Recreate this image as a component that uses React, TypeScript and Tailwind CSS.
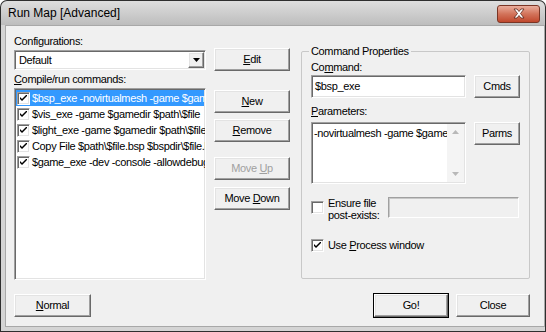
import React from 'react';

const font = { fontFamily: '"Liberation Sans", Arial, sans-serif' };

const btn =
  'flex items-center justify-center bg-[#f0f0f0] text-[11px] text-black border border-t-white border-l-white border-r-[#696969] border-b-[#696969] shadow-[inset_-1px_-1px_0_#a0a0a0,inset_1px_1px_0_#e3e3e3]';

const sunken =
  'border border-t-[#a0a0a0] border-l-[#a0a0a0] border-r-white border-b-white shadow-[inset_1px_1px_0_#696969,inset_-1px_-1px_0_#e3e3e3]';

const Check: React.FC<{ checked?: boolean }> = ({ checked }) => (
  <span className={`w-[13px] h-[13px] shrink-0 bg-white flex items-center justify-center ${sunken}`}>
    {checked && (
      <svg width="7" height="7" viewBox="0 0 7 7">
        <path d="M0 2 L0 4 L2 6 L7 1 L7 -1 L2 4 Z" fill="#000" />
      </svg>
    )}
  </span>
);

const Button: React.FC<{ children: React.ReactNode; className?: string }> = ({ children, className }) => (
  <button className={`${btn} ${className ?? ''}`}>
    <span>{children}</span>
  </button>
);

const commands = [
  '$bsp_exe -novirtualmesh -game $gamedir $path\\$file',
  '$vis_exe -game $gamedir $path\\$file',
  '$light_exe -game $gamedir $path\\$file',
  'Copy File $path\\$file.bsp $bspdir\\$file.bsp',
  '$game_exe -dev -console -allowdebug -game $gamedir',
];

export default function App() {
  return (
    <div style={font} className="w-[546px] h-[332px] bg-[#2e2e2e] rounded-t-[7px] p-px flex flex-col overflow-hidden tracking-[-0.35px]">
      {/* Title bar */}
      <div className="h-[24px] rounded-t-[6px] bg-gradient-to-b from-[#dedede] to-[#bdbdbd] flex items-center justify-between pl-[7px] pr-[5px]">
        <span className="text-[12px] text-black tracking-normal">Run Map [Advanced]</span>
        <div className="w-[43px] h-[18px] mt-[1px] rounded-[3px] border border-[#7a3525] bg-gradient-to-b from-[#e9ad9c] via-[#d2735a] to-[#c0472c] flex items-center justify-center">
          <svg width="14" height="11" viewBox="0 0 14 11">
            <path d="M2 1 L5 1 L7 3.5 L9 1 L12 1 L8.5 5.5 L12 10 L9 10 L7 7.5 L5 10 L2 10 L5.5 5.5 Z" fill="#fff" stroke="#5a2418" strokeWidth="0.8" />
          </svg>
        </div>
      </div>

      {/* Frame */}
      <div className="flex-1 bg-[#d4d4d4] px-[4px] pb-[4px] flex">
        <div className="flex-1 bg-[#f0f0f0] border border-[#a8a8a8] flex flex-col pl-[8px] pr-[14px] pt-[9px] text-[11px] text-black">
          <div className="flex">
            {/* Left column */}
            <div className="w-[192px] flex flex-col">
              <span className="h-[13px] leading-[13px]">Configurations:</span>
              <div className={`mt-[2px] h-[20px] bg-white flex items-center ${sunken}`}>
                <span className="flex-1 pl-[4px]">Default</span>
                <span className={`${btn} w-[16px] h-[16px] mr-[1px]`}>
                  <svg width="7" height="4" viewBox="0 0 7 4">
                    <path d="M0 0 H7 L3.5 4 Z" fill="#000" />
                  </svg>
                </span>
              </div>
              <span className="mt-[3px] h-[13px] leading-[13px]">
                <u>C</u>ompile/run commands:
              </span>
              <div className={`mt-[2px] h-[192px] bg-white overflow-hidden pt-[1px] px-[1px] ${sunken}`}>
                {commands.map((c, i) => (
                  <div
                    key={c}
                    className={`h-[16px] flex items-center gap-[2px] pl-[1px] whitespace-nowrap ${i === 0 ? 'bg-[#3399ff] text-white' : ''}`}
                  >
                    <Check checked />
                    <span className="leading-[16px]">{c}</span>
                  </div>
                ))}
              </div>
            </div>

            {/* Button column */}
            <div className="ml-[8px] w-[76px] flex flex-col pt-[13px]">
              <Button className="h-[23px]">
                <u>E</u>dit
              </Button>
              <Button className="h-[23px] mt-[19px]">
                <u>N</u>ew
              </Button>
              <Button className="h-[23px] mt-[6px]">
                <u>R</u>emove
              </Button>
              <Button className="h-[23px] mt-[15px] !text-[#a0a0a0]">
                Move <u>U</u>p
              </Button>
              <Button className="h-[23px] mt-[7px]">
                Move <u>D</u>own
              </Button>
            </div>

            {/* Command Properties group */}
            <div className="ml-[11px] flex-1 mt-[16px] h-[228px] border border-[#c8c8c8] rounded-[2px] relative px-[9px]">
              <span className="absolute -top-[7px] left-[7px] bg-[#f0f0f0] px-[2px] leading-[13px]">Command Properties</span>
              <div className="pt-[9px] flex flex-col">
                <span className="h-[13px] leading-[13px]">
                  Co<u>m</u>mand:
                </span>
                <div className="flex mt-[1px] gap-[8px]">
                  <div className={`w-[155px] h-[23px] bg-white flex items-center pl-[3px] ${sunken}`}>$bsp_exe</div>
                  <Button className="w-[46px] h-[23px]">Cmds</Button>
                </div>
                <span className="mt-[7px] h-[13px] leading-[13px]">
                  <u>P</u>arameters:
                </span>
                <div className="flex mt-[4px] gap-[8px] items-start">
                  <div className={`w-[155px] h-[62px] bg-white flex ${sunken}`}>
                    <span className="flex-1 min-w-0 pl-[2px] pt-[2px] whitespace-nowrap overflow-hidden">-novirtualmesh -game $gamedir</span>
                    <div className="w-[17px] shrink-0 bg-[#f4f4f4] flex flex-col justify-between items-center py-[6px] mr-[1px] my-[1px]">
                      <svg width="7" height="4" viewBox="0 0 7 4">
                        <path d="M0 4 H7 L3.5 0 Z" fill="#b8b8b8" />
                      </svg>
                      <svg width="7" height="4" viewBox="0 0 7 4">
                        <path d="M0 0 H7 L3.5 4 Z" fill="#b8b8b8" />
                      </svg>
                    </div>
                  </div>
                  <Button className="w-[46px] h-[23px]">Parms</Button>
                </div>
                <div className="flex mt-[13px] items-start">
                  <span className="mt-[4px]">
                    <Check />
                  </span>
                  <span className="ml-[4px] leading-[12px] w-[60px]">
                    Ensure file
                    <br />
                    post-exists:
                  </span>
                  <div className="w-[131px] h-[21px] bg-[#f0f0f0] border border-t-[#a0a0a0] border-l-[#a0a0a0] border-r-white border-b-white shadow-[inset_1px_1px_0_#c8c8c8]" />
                </div>
                <div className="flex mt-[16px] items-center">
                  <Check checked />
                  <span className="ml-[4px]">
                    Use <u>P</u>rocess window
                  </span>
                </div>
              </div>
            </div>
          </div>

          {/* Bottom buttons */}
          <div className="flex mt-[14px]">
            <Button className="w-[77px] h-[23px]">
              <u>N</u>ormal
            </Button>
            <div className="flex-1" />
            <Button className="w-[74px] h-[23px] outline outline-1 outline-black">Go!</Button>
            <Button className="w-[74px] h-[23px] ml-[8px]">Close</Button>
          </div>
        </div>
      </div>
    </div>
  );
}
